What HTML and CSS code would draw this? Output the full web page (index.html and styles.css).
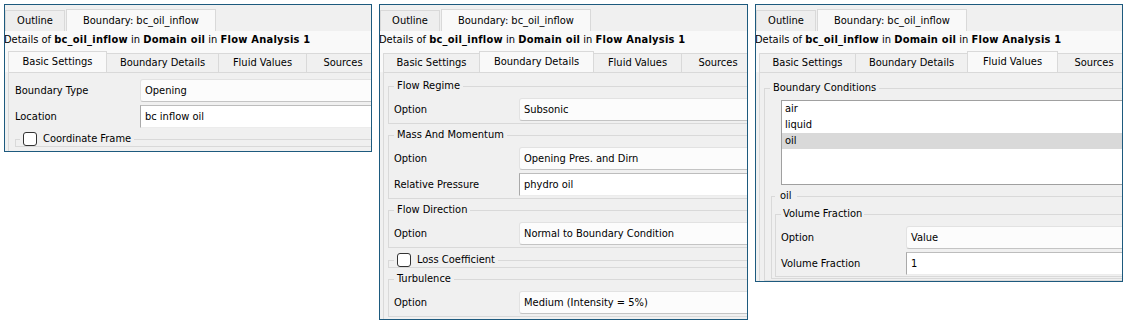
FILE: index.html
```html
<!DOCTYPE html>
<html lang="en">
<head>
    <meta charset="UTF-8">
    <meta name="viewport" content="width=device-width, initial-scale=1.0">
    <title>Boundary: bc_oil_inflow</title>
    <link rel="stylesheet" href="styles.css">
</head>
<body>
    <div class="screens">

        <!-- Basic Settings -->
        <section class="panel panel-basic">
            <div class="doc-tabs">
                <span class="doc-tab">Outline</span>
                <span class="doc-tab active">Boundary: bc_oil_inflow</span>
            </div>
            <div class="details">Details of <b>bc_oil_inflow</b> in <b>Domain oil</b> in <b>Flow Analysis 1</b></div>
            <div class="tabs">
                <span class="tab tab-basic active">Basic Settings</span>
                <span class="tab tab-details">Boundary Details</span>
                <span class="tab tab-fluid">Fluid Values</span>
                <span class="tab tab-sources">Sources</span>
            </div>
            <div class="pane">
                <div class="row"><span class="label">Boundary Type</span><span class="combo">Opening</span></div>
                <div class="row"><span class="label">Location</span><span class="edit">bc inflow oil</span></div>
                <fieldset class="group check-group">
                    <legend><span class="checkbox"></span>Coordinate Frame</legend>
                </fieldset>
            </div>
        </section>

        <!-- Boundary Details -->
        <section class="panel panel-details">
            <div class="doc-tabs">
                <span class="doc-tab">Outline</span>
                <span class="doc-tab active">Boundary: bc_oil_inflow</span>
            </div>
            <div class="details">Details of <b>bc_oil_inflow</b> in <b>Domain oil</b> in <b>Flow Analysis 1</b></div>
            <div class="tabs">
                <span class="tab tab-basic">Basic Settings</span>
                <span class="tab tab-details active">Boundary Details</span>
                <span class="tab tab-fluid">Fluid Values</span>
                <span class="tab tab-sources">Sources</span>
            </div>
            <div class="pane">
                <fieldset class="group">
                    <legend>Flow Regime</legend>
                    <div class="row"><span class="label">Option</span><span class="combo">Subsonic</span></div>
                </fieldset>
                <fieldset class="group">
                    <legend>Mass And Momentum</legend>
                    <div class="row"><span class="label">Option</span><span class="combo">Opening Pres. and Dirn</span></div>
                    <div class="row"><span class="label">Relative Pressure</span><span class="edit">phydro oil</span></div>
                </fieldset>
                <fieldset class="group">
                    <legend>Flow Direction</legend>
                    <div class="row"><span class="label">Option</span><span class="combo">Normal to Boundary Condition</span></div>
                </fieldset>
                <fieldset class="group check-group">
                    <legend><span class="checkbox"></span>Loss Coefficient</legend>
                </fieldset>
                <fieldset class="group">
                    <legend>Turbulence</legend>
                    <div class="row"><span class="label">Option</span><span class="combo">Medium (Intensity = 5%)</span></div>
                </fieldset>
            </div>
        </section>

        <!-- Fluid Values -->
        <section class="panel panel-fluid">
            <div class="doc-tabs">
                <span class="doc-tab">Outline</span>
                <span class="doc-tab active">Boundary: bc_oil_inflow</span>
            </div>
            <div class="details">Details of <b>bc_oil_inflow</b> in <b>Domain oil</b> in <b>Flow Analysis 1</b></div>
            <div class="tabs">
                <span class="tab tab-basic">Basic Settings</span>
                <span class="tab tab-details">Boundary Details</span>
                <span class="tab tab-fluid active">Fluid Values</span>
                <span class="tab tab-sources">Sources</span>
            </div>
            <div class="pane">
                <fieldset class="group conditions">
                    <legend>Boundary Conditions</legend>
                    <ul class="list">
                        <li>air</li>
                        <li>liquid</li>
                        <li class="selected">oil</li>
                    </ul>
                    <fieldset class="group fluid-group">
                        <legend>oil</legend>
                        <fieldset class="group">
                            <legend>Volume Fraction</legend>
                            <div class="row"><span class="label">Option</span><span class="combo">Value</span></div>
                            <div class="row"><span class="label">Volume Fraction</span><span class="edit">1</span></div>
                        </fieldset>
                    </fieldset>
                </fieldset>
            </div>
        </section>

    </div>
</body>
</html>
```

FILE: styles.css
```css
:root {
    --frame: #1d5a7e;
    --window: #f0f0f0;
    --light: #f9f9f9;
    --line: #d9d9d9;
    --text: #000;
}

* {
    box-sizing: border-box;
    margin: 0;
    padding: 0;
}

body {
    font-family: "DejaVu Sans Condensed", "DejaVu Sans", sans-serif;
    font-stretch: condensed;
    font-size: 11px;
    line-height: 14px;
    color: var(--text);
    background: #fff;
}

b {
    font-weight: 700;
    letter-spacing: 0.25px;
}

.screens {
    display: flex;
    align-items: flex-start;
    gap: 7px;
    padding: 4px;
}

.panel {
    display: flex;
    flex-direction: column;
    width: 368px;
    border: 1px solid var(--frame);
    background: var(--window);
    overflow: hidden;
}

.panel-basic { height: 148px; }
.panel-details { width: 369px; height: 316px; }
.panel-fluid { height: 278px; }

/* top document tabs */
.doc-tabs {
    display: flex;
    align-items: flex-end;
    height: 26px;
    flex-shrink: 0;
    background: var(--window);
}

.doc-tab {
    width: 60px;
    height: 21px;
    line-height: 20px;
    text-align: center;
    border: 1px solid var(--line);
    border-bottom: 0;
    background: #eeeeee;
}

.doc-tab.active {
    width: 150px;
    height: 22px;
    line-height: 21px;
    margin-left: 1px;
    background: var(--light);
}

.details {
    height: 17px;
    flex-shrink: 0;
    line-height: 17px;
    text-indent: -1px;
    white-space: nowrap;
    background: var(--light);
}

/* settings tabs */
.tabs {
    display: flex;
    align-items: flex-end;
    height: 24px;
    flex-shrink: 0;
    padding-left: 3px;
    background: var(--light);
}

.tab {
    box-sizing: content-box;
    flex-shrink: 0;
    height: 18px;
    line-height: 18px;
    text-align: center;
    border: 1px solid var(--line);
    border-bottom: 0;
    margin-left: -1px;
    background: var(--window);
    white-space: nowrap;
}

.tab:first-child { margin-left: 0; }

.tab-basic { width: 95px; }
.tab-details { width: 111px; }
.tab-fluid { width: 87px; }
.tab-sources { width: 72px; }

.tab.active {
    height: 20px;
    line-height: 19px;
    padding: 0 1px;
    background: var(--light);
}

.pane {
    flex: 1;
    margin-left: 3px;
    margin-right: -20px;
    padding: 6px 0 0 6px;
    border-left: 1px solid var(--line);
    border-top: 1px solid var(--line);
}

.panel-details .pane { padding-left: 4px; }
.panel-fluid .pane { padding: 8px 0 0 4px; }

/* label + field rows */
.row {
    display: grid;
    grid-template-columns: 125px 1fr;
    align-items: center;
    height: 23px;
}

.row + .row {
    margin-top: 3px;
}

.combo,
.edit {
    height: 23px;
    line-height: 21px;
    padding-left: 4px;
    white-space: nowrap;
}

.combo {
    background: #fcfcfc;
    border: 1px solid #e2e2e2;
    border-bottom-color: #c4c4c4;
    border-radius: 3px 0 0 3px;
}

.edit {
    background: #fff;
    border: 1px solid #ececec;
    border-top-color: #bdbdbd;
    border-left-color: #a9a9a9;
}

/* group boxes */
.group {
    border: 1px solid var(--line);
    padding: 5px 0 2px 5px;
    min-width: 0;
}

.group + .group {
    margin-top: 4px;
}

.group legend {
    padding: 0 3px;
    line-height: 14px;
}

.panel-basic .row + .group {
    margin-top: 4px;
}

.check-group {
    padding: 0 0 0 5px;
}

.panel-basic .check-group {
    padding-left: 4px;
}

.check-group legend {
    display: flex;
    align-items: center;
    gap: 6px;
}

.group + .check-group {
    margin-top: 5px;
}

.checkbox {
    width: 14px;
    height: 14px;
    border: 1px solid #333;
    border-radius: 3px;
    background: #fff;
}

/* fluid list */
.list {
    list-style: none;
    height: 85px;
    margin-left: 11px;
    background: #fff;
    border: 1px solid #a0a0a0;
}

.list li {
    height: 16px;
    line-height: 16px;
    padding-left: 3px;
}

.list .selected {
    background: #d9d9d9;
}

.conditions {
    padding: 5px 0 1px 5px;
}

.fluid-group {
    margin: 4px 0 0 1px;
    padding: 4px 0 1px 3px;
}

.fluid-group legend {
    padding: 0 5px;
}

.fluid-group .group {
    padding-bottom: 1px;
}

.fluid-group .group legend {
    padding: 0 2px;
}
```
